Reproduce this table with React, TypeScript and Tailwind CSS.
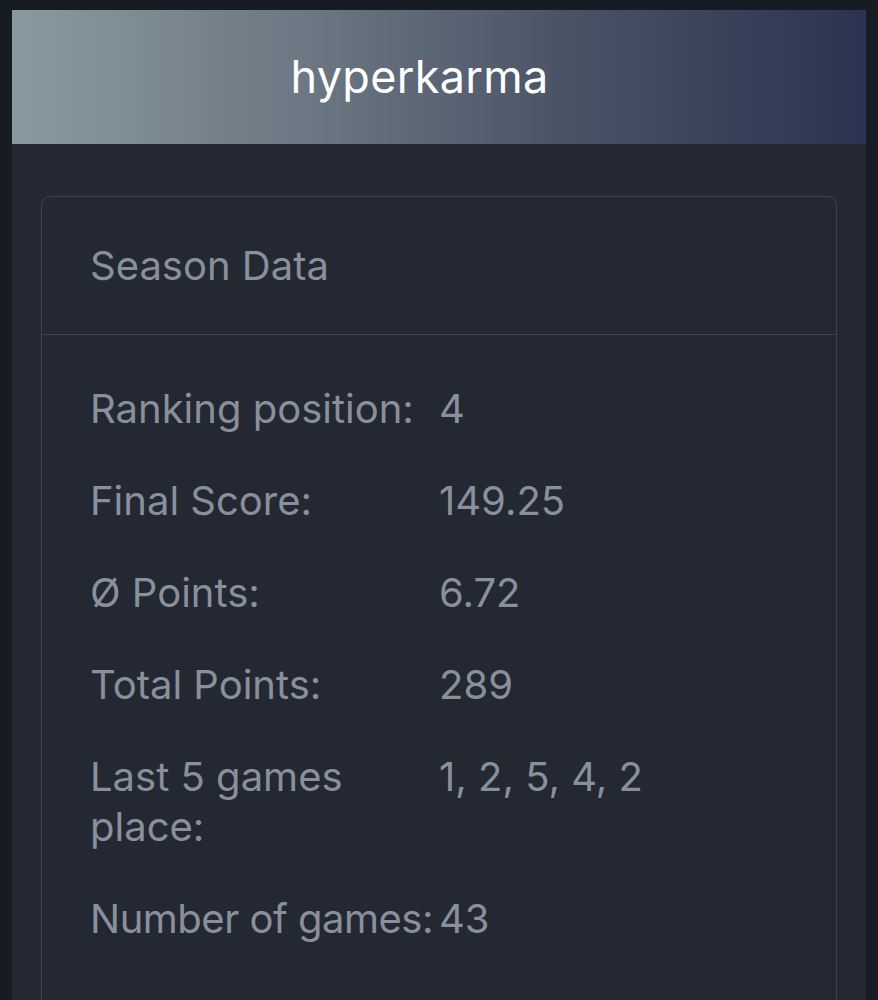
export default function App() {
  const rows: [string, string, boolean][] = [
    ["Ranking position:", "4", false],
    ["Final Score:", "149.25", false],
    ["Ø Points:", "6.72", false],
    ["Total Points:", "289", false],
    ["Last 5 games place:", "1, 2, 5, 4, 2", false],
    ["Number of games:", "43", true],
  ];
  return (
    <div className="min-h-[1000px] bg-[#171b23] pt-[10px] pl-[12px] pr-[12px]" style={{ fontFamily: "Inter, 'Noto Sans', sans-serif" }}>
      <div className="bg-[#232833] min-h-[990px]">
        <div className="h-[134px] flex items-center justify-center pr-[39px] bg-[linear-gradient(90deg,#8a999f_0%,#6b7782_35%,#4a5366_65%,#2c3350_100%)]">
          <span className="text-white text-[45px] tracking-[0.3px]">hyperkarma</span>
        </div>
        <div className="pt-[52px] px-[29px]">
          <div className="border border-[#3c424e] rounded-[9px] min-h-[820px]">
            <div className="h-[138px] flex items-center px-[48px] border-b border-[#3c424e] text-[#8a909b] text-[40px]">
              Season Data
            </div>
            <div className="px-[48px] pt-[49px] flex flex-col gap-[42px] text-[#8a909b] text-[40px] leading-[50px]">
              {rows.map(([k, v, nowrap]) => (
                <div key={k} className="flex">
                  <div className={nowrap ? "min-w-[349px] whitespace-nowrap tracking-[-0.5px]" : "w-[349px] shrink-0 pr-[4px]"}>{k}</div>
                  <div>{v}</div>
                </div>
              ))}
            </div>
          </div>
        </div>
      </div>
    </div>
  );
}
